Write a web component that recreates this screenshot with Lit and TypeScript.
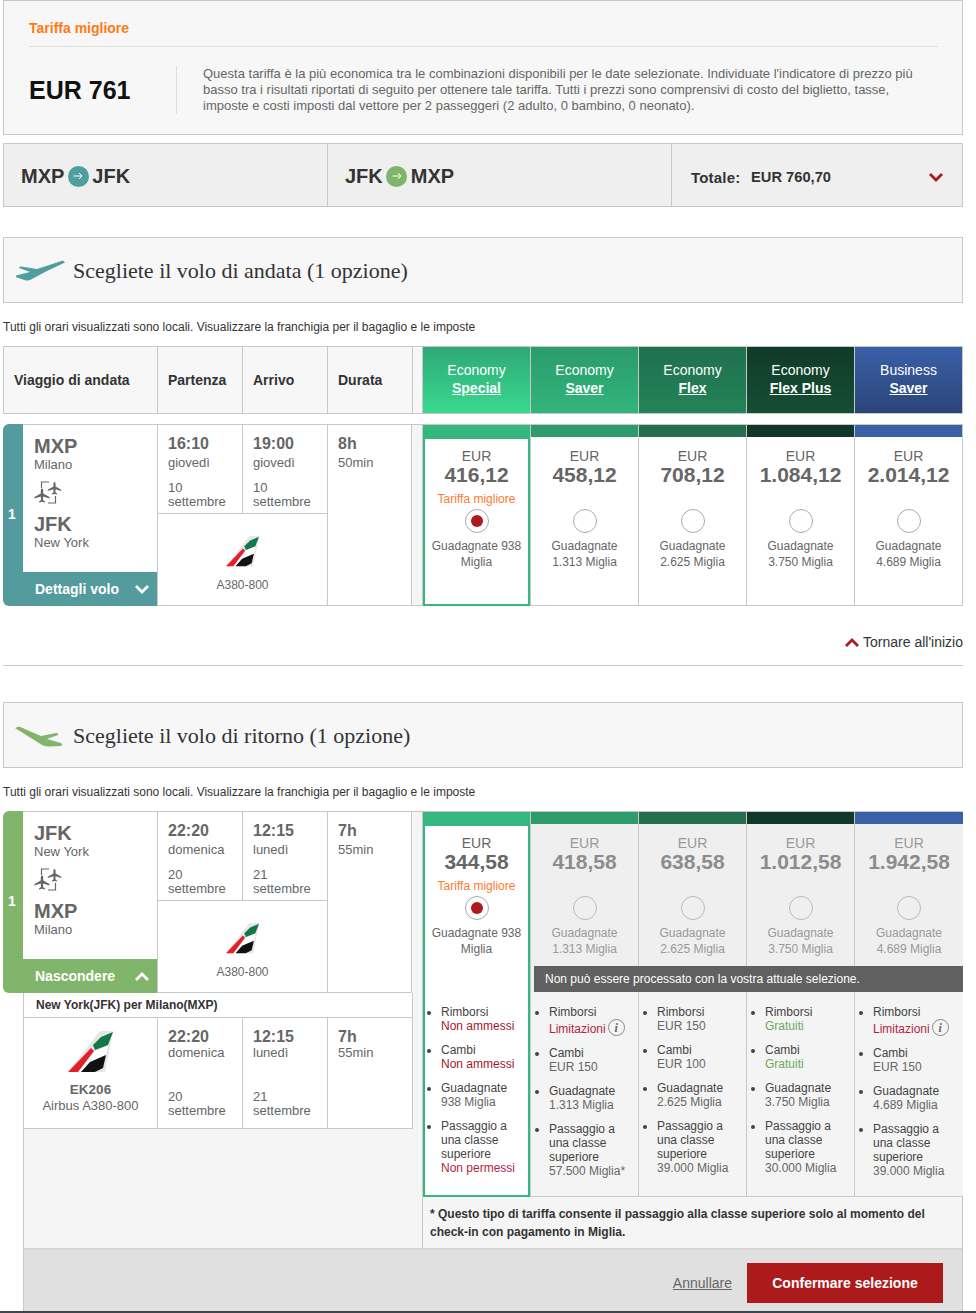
import { LitElement, html, css } from 'lit'
import { customElement } from 'lit/decorators.js'

const FARE_COLORS = ['#35b880', '#2e9b6c', '#236f50', '#12382a', '#3a60a8']

const HEADERS = [
    ['Economy', 'Special', 'h-special'],
    ['Economy', 'Saver', 'h-saver'],
    ['Economy', 'Flex', 'h-flex'],
    ['Economy', 'Flex Plus', 'h-plus'],
    ['Business', 'Saver', 'h-business'],
]

const OUT_FARES = [
    { price: '416,12', miles: '938', best: true },
    { price: '458,12', miles: '1.313' },
    { price: '708,12', miles: '2.625' },
    { price: '1.084,12', miles: '3.750' },
    { price: '2.014,12', miles: '4.689' },
]

const RET_FARES = [
    { price: '344,58', miles: '938', best: true },
    { price: '418,58', miles: '1.313' },
    { price: '638,58', miles: '2.625' },
    { price: '1.012,58', miles: '3.750' },
    { price: '1.942,58', miles: '4.689' },
]

type Cond = [string, string, string?]

const CONDITIONS: { miles: string; refund: Cond; change: Cond; upgrade: Cond }[] = [
    {
        miles: '938',
        refund: ['Non ammessi', 'no'],
        change: ['Non ammessi', 'no'],
        upgrade: ['Non permessi', 'limit'],
    },
    {
        miles: '1.313',
        refund: ['Limitazioni', 'limit', 'info'],
        change: ['EUR 150', ''],
        upgrade: ['57.500 Miglia*', ''],
    },
    {
        miles: '2.625',
        refund: ['EUR 150', ''],
        change: ['EUR 100', ''],
        upgrade: ['39.000 Miglia', ''],
    },
    {
        miles: '3.750',
        refund: ['Gratuiti', 'free'],
        change: ['Gratuiti', 'free'],
        upgrade: ['30.000 Miglia', ''],
    },
    {
        miles: '4.689',
        refund: ['Limitazioni', 'limit', 'info'],
        change: ['EUR 150', ''],
        upgrade: ['39.000 Miglia', ''],
    },
]

const tail = (w: number, h: number) => html`<svg width=${w} height=${h} viewBox="0 0 45 42">
    <path d="M0 41 L32 0 L45 0 L37 41 Z" fill="#e6e6e6" />
    <path d="M25 14 L33 6 L45 1 L40 14 L27 19 Z" fill="#12784a" />
    <path d="M10 41 L27 20 L40 15 L38 24 L22 31 L13 41 Z" fill="#fff" />
    <path d="M0 41 L23 17 L26 20 L10 41 Z" fill="#e2202c" />
    <path d="M13 41 L22 31 L38 24 L35 37 L27 41 Z" fill="#111" />
</svg>`

const PLANE =
    'M0 0 Q1.2 0 1.2 2 L1.2 5 L7.5 8.5 L7.5 10 L1.2 8 L1 11.5 L3 13 L3 14 L0 13.2 L-3 14 L-3 13 L-1 11.5 L-1.2 8 L-7.5 10 L-7.5 8.5 L-1.2 5 L-1.2 2 Q-1.2 0 0 0 Z'

const connIcon = html`<svg class="conn" width="28" height="23" viewBox="0 0 28 23" fill="none">
    <path d="M7.5 7 V1 H15 M14 22 H21.5 V15" stroke="#666" stroke-width="1.2" />
    <path d=${PLANE} fill="#666" transform="translate(20.5 1) scale(.9)" />
    <path d=${PLANE} fill="#666" transform="translate(8 7.5) scale(1)" />
</svg>`

const planeUp = (c: string) => html`<svg width="52" height="22" viewBox="0 0 52 22">
    <path
        d="M51 2.5 L49 .5 L23 9 L7 6.5 Q5 6.5 5 8 L16 12 L2 15.5 Q1 17 3 17.5 L12 20.5 Q15 21 18 19 L32 11.5 Z"
        fill=${c}
    />
</svg>`

const planeDown = (c: string) => html`<svg width="52" height="23" viewBox="0 0 52 23">
    <path
        d="M1 3 L5 1.5 L27 11 L42 8 Q45 8 44 10 L33 14 L47 18 Q49 20 47 21 L36 21.5 Q31 21.5 28 20 Z"
        fill=${c}
    />
</svg>`

const chevron = (c: string, up = false) => html`<svg width="14" height="9" viewBox="0 0 14 9">
    <path
        d=${up ? 'M1 8 L7 2 L13 8' : 'M1 1 L7 7 L13 1'}
        fill="none"
        stroke=${c}
        stroke-width="2.8"
    />
</svg>`

const arrowBadge = (c: string) => html`<span class="badge" style="background:${c}">
    <svg width="10" height="8" viewBox="0 0 10 8">
        <path d="M0.5 4 H9 M6 1 L9 4 L6 7" fill="none" stroke="#fff" stroke-width="1" />
    </svg>
</span>`

@customElement('app-root')
export class AppRoot extends LitElement {
    static styles = css`
        :host {
            display: block;
            width: 976px;
            height: 1313px;
            overflow: hidden;
            background: #fff;
            font-family: 'Liberation Sans', Arial, sans-serif;
            font-size: 12px;
            color: #666;
        }
        * {
            box-sizing: border-box;
        }
        .page {
            width: 960px;
            margin-left: 3px;
        }

        /* best fare box */
        .best {
            height: 135px;
            background: #f7f7f7;
            border: 1px solid #c8c8c8;
            padding: 0 24px 0 25px;
        }
        .best-title {
            height: 46px;
            padding-top: 19px;
            border-bottom: 1px solid #ddd;
            font-size: 14px;
            font-weight: bold;
            color: #ff7a14;
        }
        .best-body {
            display: flex;
            align-items: center;
            margin-top: 19px;
        }
        .best-price {
            width: 148px;
            height: 48px;
            line-height: 48px;
            border-right: 1px solid #ddd;
            font-size: 25px;
            font-weight: bold;
            color: #111;
        }
        .best-text {
            flex: 1;
            padding-left: 26px;
            font-size: 13px;
            line-height: 16px;
            white-space: nowrap;
            color: #666;
        }

        /* route bar */
        .routes {
            display: flex;
            height: 64px;
            margin-top: 8px;
            background: #efefef;
            border: 1px solid #c8c8c8;
        }
        .route {
            display: flex;
            align-items: center;
            gap: 3.5px;
            padding: 2px 0 0 17px;
            border-right: 1px solid #c8c8c8;
            font-size: 20px;
            font-weight: bold;
            color: #333;
        }
        .route.first {
            width: 324px;
        }
        .route.second {
            width: 344px;
        }
        .badge {
            display: inline-flex;
            align-items: center;
            justify-content: center;
            width: 21px;
            height: 21px;
            border-radius: 50%;
        }
        .total {
            flex: 1;
            display: flex;
            align-items: center;
            padding: 4px 19px 0 19px;
            font-weight: bold;
            color: #333;
        }
        .total-label {
            font-size: 15px;
            letter-spacing: 0.2px;
            width: 60px;
        }
        .total-value {
            flex: 1;
            font-size: 14.7px;
        }

        /* section heading */
        .heading {
            display: flex;
            align-items: center;
            gap: 7px;
            height: 66px;
            padding: 2px 0 0 10px;
            background: #f7f7f7;
            border: 1px solid #c8c8c8;
            font-family: 'Liberation Serif', serif;
            font-size: 22px;
            color: #333;
        }
        .heading.outbound {
            margin-top: 30px;
        }
        .heading.inbound {
            margin-top: 36px;
        }
        .note {
            height: 43px;
            padding-top: 17px;
            line-height: 14px;
            color: #333;
        }

        /* header row */
        .thead {
            display: grid;
            grid-template-columns: 154px 85px 85px 85px 10px repeat(4, 108px) 109px;
            height: 68px;
            border: 1px solid #c8c8c8;
            border-width: 1px 0;
            width: 960px;
            background: #f7f7f7;
        }
        .th {
            display: flex;
            align-items: center;
            padding-left: 10px;
            border-left: 1px solid #c8c8c8;
            font-size: 14px;
            font-weight: bold;
            color: #333;
        }
        .th.gap {
            padding: 0;
        }
        .fh {
            display: flex;
            flex-direction: column;
            align-items: center;
            justify-content: center;
            padding-bottom: 2px;
            border-left: 1px solid #c8c8c8;
            font-size: 14px;
            line-height: 18px;
            color: #fff;
        }
        .fh b {
            text-decoration: underline;
        }
        .fh:last-child {
            border-right: 1px solid #c8c8c8;
        }
        .h-special {
            background: linear-gradient(#2fa878, #39d98f);
        }
        .h-saver {
            background: linear-gradient(#2b9b6c, #31b57b);
        }
        .h-flex {
            background: linear-gradient(#21704f, #238358);
        }
        .h-plus {
            background: linear-gradient(#113a29, #154f34);
        }
        .h-business {
            background: linear-gradient(#3a60a8, #2a4578);
        }

        /* flight row */
        .row {
            display: grid;
            grid-template-columns: 154px 85px 85px 85px 10px repeat(4, 108px) 109px;
            width: 960px;
            height: 182px;
        }
        .row.outbound {
            margin-top: 10px;
        }
        .leg {
            position: relative;
            display: flex;
            flex-direction: column;
            border-radius: 6px 0 0 6px;
            overflow: hidden;
            background: var(--accent);
            color: #fff;
        }
        .leg-num {
            position: absolute;
            left: 5px;
            top: 82px;
            font-size: 14px;
            font-weight: bold;
        }
        .leg-info {
            height: 148px;
            margin-left: 20px;
            padding: 9px 0 0 11px;
            background: #fff;
            border-top: 1px solid #c8c8c8;
            color: #666;
        }
        .code {
            font-size: 20px;
            font-weight: bold;
            line-height: 24px;
        }
        .city {
            font-size: 13px;
            line-height: 13px;
        }
        .conn {
            display: block;
            margin: 10px 0 8px 0;
        }
        .leg-toggle {
            flex: 1;
            display: flex;
            align-items: center;
            justify-content: space-between;
            padding: 0 8px 0 32px;
            font-size: 14px;
            font-weight: bold;
        }
        .times {
            grid-column: span 2;
            display: flex;
            flex-direction: column;
            border: 1px solid #c8c8c8;
            border-width: 1px 0 1px 1px;
        }
        .times-top {
            display: grid;
            grid-template-columns: 84px 85px;
            height: 89px;
            border-bottom: 1px solid #c8c8c8;
        }
        .time {
            padding: 9px 0 0 10px;
        }
        .time + .time {
            border-left: 1px solid #c8c8c8;
        }
        .clock {
            font-size: 16px;
            font-weight: bold;
            line-height: 20px;
        }
        .day {
            font-size: 13px;
            line-height: 14px;
            margin-top: 2px;
        }
        .date {
            font-size: 13px;
            line-height: 14px;
            margin-top: 11px;
        }
        .craft {
            flex: 1;
            display: flex;
            flex-direction: column;
            align-items: center;
            padding-top: 22px;
            gap: 11px;
        }
        .craft svg {
            display: block;
        }
        .dur {
            padding: 9px 0 0 10px;
            border: 1px solid #c8c8c8;
        }
        .gapcell {
            background: #f5f5f5;
            border-bottom: 1px solid #c8c8c8;
            border-top: 1px solid #c8c8c8;
        }
        .gapcell.open {
            border-bottom: 0;
        }

        /* fare cell */
        .fare {
            position: relative;
            display: flex;
            flex-direction: column;
            align-items: center;
            border: 1px solid #c8c8c8;
            border-width: 1px 0 1px 1px;
            background: #fff;
            text-align: center;
        }
        .fare:last-child {
            border-right: 1px solid #c8c8c8;
        }
        .strip {
            align-self: stretch;
            height: 12px;
            flex: none;
        }
        .eur {
            margin-top: 12px;
            font-size: 14px;
            line-height: 15px;
        }
        .amount {
            font-size: 21px;
            font-weight: bold;
            line-height: 22px;
        }
        .best-tag {
            height: 17px;
            margin-top: 5px;
            line-height: 17px;
            color: #ff7a2e;
        }
        .radio {
            width: 24px;
            height: 24px;
            margin-top: 1px;
            border: 1px solid #aaa;
            border-radius: 50%;
            background: #fff;
            display: flex;
            align-items: center;
            justify-content: center;
        }
        .radio i {
            display: block;
            width: 12px;
            height: 12px;
            border-radius: 50%;
            background: #b0191d;
        }
        .miles {
            margin-top: 5px;
            line-height: 16px;
        }
        .fare.selected::after {
            content: '';
            position: absolute;
            left: 0;
            right: 0;
            top: 12px;
            bottom: -1px;
            border: 2px solid #35b880;
            pointer-events: none;
        }
        .fare.off {
            background: #efefef;
            color: #999;
        }
        .fare.off .radio {
            background: #efefef;
            border-color: #bbb;
        }
        .fare.off .amount {
            color: #8c8c8c;
        }

        /* return block */
        .inbound-grid {
            display: grid;
            grid-template-columns: 419px 541px;
            width: 960px;
        }
        .inbound-left {
            display: flex;
            flex-direction: column;
        }
        .inbound-left .row {
            grid-template-columns: 154px 85px 85px 85px 10px;
            width: 419px;
        }
        .sub {
            margin-left: 20px;
            padding-right: 9px;
            background: #f5f5f5;
        }
        .sub-inner {
            width: 390px;
            background: #fff;
            border: 1px solid #c8c8c8;
            border-width: 0 1px;
        }
        .sub-title {
            height: 25px;
            padding-left: 12px;
            line-height: 24px;
            border-bottom: 1px solid #c8c8c8;
            font-weight: bold;
            color: #333;
        }
        .sub-body {
            display: grid;
            grid-template-columns: 133px 85px 85px 85px;
            height: 111px;
            border-bottom: 1px solid #c8c8c8;
        }
        .sub-cell {
            padding: 9px 0 0 10px;
            border-left: 1px solid #c8c8c8;
        }
        .sub-cell.plane {
            border-left: 0;
            padding: 13px 0 0 0;
            display: flex;
            flex-direction: column;
            align-items: center;
        }
        .sub-cell.plane svg {
            display: block;
        }
        .flightno {
            margin-top: 9px;
            font-size: 13.5px;
            font-weight: bold;
            line-height: 16px;
        }
        .plane-type {
            font-size: 13px;
            line-height: 16px;
        }
        .sub-cell .day {
            margin-top: -1px;
        }
        .sub-cell .date {
            margin-top: 30px;
        }
        .filler {
            flex: 1;
            margin-left: 20px;
            background: #f5f5f5;
            border-left: 1px solid #c8c8c8;
        }
        .inbound-right {
            display: flex;
            flex-direction: column;
        }
        .fares {
            position: relative;
            display: grid;
            grid-template-columns: repeat(4, 108px) 109px;
            height: 386px;
        }
        .banner {
            position: absolute;
            left: 112px;
            right: 0;
            top: 155px;
            height: 26px;
            padding-left: 11px;
            line-height: 26px;
            background: #606060;
            color: #fff;
        }
        ul {
            position: absolute;
            top: 180px;
            bottom: 0;
            left: 0;
            width: 100%;
            margin: 0;
            padding: 13px 16px 0 18px;
            list-style: disc;
            text-align: left;
            line-height: 14px;
            color: #444;
        }
        .fare.off ul {
            background: #f4f4f4;
        }
        li {
            margin-bottom: 10px;
        }
        li span {
            display: block;
            white-space: nowrap;
        }
        li span.with-info {
            display: flex;
            align-items: flex-end;
            height: 17px;
        }
        .no {
            color: #a2182b;
        }
        .limit {
            color: #b5243f;
        }
        .free {
            color: #6fa85c;
        }
        .cond-plain {
            color: #666;
        }
        .info {
            display: inline-flex;
            align-items: center;
            justify-content: center;
            flex: none;
            width: 17px;
            height: 17px;
            margin-left: 2px;
            border: 1px solid #888;
            border-radius: 50%;
            font-family: 'Liberation Serif', serif;
            font-style: italic;
            font-weight: bold;
            font-size: 12px;
            color: #666;
        }
        .footnote {
            height: 51px;
            padding: 8px 0 0 7px;
            line-height: 18px;
            background: #f5f5f5;
            border-left: 1px solid #c8c8c8;
            border-right: 1px solid #c8c8c8;
            font-weight: bold;
            color: #333;
        }

        /* top link */
        .back {
            display: flex;
            justify-content: flex-end;
            align-items: center;
            gap: 4px;
            margin-top: 29px;
            height: 14px;
            font-size: 14px;
            color: #333;
        }
        .rule {
            margin-top: 16px;
            border-top: 1px solid #c8c8c8;
        }

        /* footer */
        .footer {
            display: flex;
            align-items: center;
            justify-content: flex-end;
            margin-left: 20px;
            height: 63px;
            padding: 5px 19px 0 0;
            gap: 15px;
            background: #e0e0e0;
            border-top: 2px solid #d4d4d4;
            border-left: 1px solid #c8c8c8;
            border-right: 1px solid #c8c8c8;
        }
        .footer a {
            font-size: 14px;
            color: #666;
            text-decoration: underline;
        }
        .confirm {
            width: 196px;
            height: 40px;
            border: 0;
            background: #ad1a1c;
            color: #fff;
            font: bold 14px 'Liberation Sans', Arial, sans-serif;
        }
        .page-end {
            height: 2px;
            background: #3c4650;
        }
    `

    private renderLeg(
        accent: string,
        from: string[],
        to: string[],
        toggle: string,
        up: boolean,
    ) {
        return html`<div class="leg" style="--accent:${accent}">
            <div class="leg-num">1</div>
            <div class="leg-info">
                <div class="code">${from[0]}</div>
                <div class="city">${from[1]}</div>
                ${connIcon}
                <div class="code">${to[0]}</div>
                <div class="city">${to[1]}</div>
            </div>
            <div class="leg-toggle">${toggle} ${chevron('#fff', up)}</div>
        </div>`
    }

    private renderTimes(dep: string[], arr: string[]) {
        const col = (t: string[]) => html`<div class="time">
            <div class="clock">${t[0]}</div>
            <div class="day">${t[1]}</div>
            <div class="date">${t[2]}<br />settembre</div>
        </div>`
        return html`<div class="times">
            <div class="times-top">${col(dep)}${col(arr)}</div>
            <div class="craft">${tail(33, 31)}<div>A380-800</div></div>
        </div>`
    }

    private renderDur(h: string, m: string) {
        return html`<div class="dur">
            <div class="clock">${h}</div>
            <div class="day">${m}</div>
        </div>`
    }

    private renderFare(f: any, i: number, off = false, cond = false) {
        const c = CONDITIONS[i]
        const line = (label: string, v: Cond) => html`<li>
            ${label}
            <span class="${v[1] || 'cond-plain'} ${v[2] ? 'with-info' : ''}"
                >${v[0]}${v[2] ? html`<i class="info">i</i>` : ''}</span
            >
        </li>`
        return html`<div class="fare ${f.best ? 'selected' : ''} ${off ? 'off' : ''}">
            <div class="strip" style="background:${FARE_COLORS[i]}"></div>
            <div class="eur">EUR</div>
            <div class="amount">${f.price}</div>
            <div class="best-tag">${f.best ? 'Tariffa migliore' : ''}</div>
            <div class="radio">${f.best ? html`<i></i>` : ''}</div>
            <div class="miles">
                Guadagnate ${f.best ? f.miles : html`<br />${f.miles}`}${f.best ? html`<br />` : ' '}Miglia
            </div>
            ${cond
                ? html`<ul>
                      ${line('Rimborsi', c.refund)} ${line('Cambi', c.change)}
                      ${line('Guadagnate', [c.miles + ' Miglia', ''])}
                      ${line('Passaggio a una classe superiore', c.upgrade)}
                  </ul>`
                : ''}
        </div>`
    }

    render() {
        return html`<div class="page">
                <div class="best">
                    <div class="best-title">Tariffa migliore</div>
                    <div class="best-body">
                        <div class="best-price">EUR 761</div>
                        <div class="best-text">
                            Questa tariffa è la più economica tra le combinazioni disponibili per le date selezionate. Individuate l'indicatore di prezzo più<br />
                            basso tra i risultati riportati di seguito per ottenere tale tariffa. Tutti i prezzi sono comprensivi di costo del biglietto, tasse,<br />
                            imposte e costi imposti dal vettore per 2 passeggeri (2 adulto, 0 bambino, 0 neonato).
                        </div>
                    </div>
                </div>

                <div class="routes">
                    <div class="route first">MXP ${arrowBadge('#4f9ea0')} JFK</div>
                    <div class="route second">JFK ${arrowBadge('#7fb56b')} MXP</div>
                    <div class="total">
                        <span class="total-label">Totale:</span>
                        <span class="total-value">EUR 760,70</span>
                        ${chevron('#ad1a1c')}
                    </div>
                </div>

                <div class="heading outbound">
                    ${planeUp('#4f9ea0')} Scegliete il volo di andata (1 opzione)
                </div>
                <div class="note">
                    Tutti gli orari visualizzati sono locali. Visualizzare la franchigia per il bagaglio e le imposte
                </div>

                <div class="thead">
                    <div class="th">Viaggio di andata</div>
                    <div class="th">Partenza</div>
                    <div class="th">Arrivo</div>
                    <div class="th">Durata</div>
                    <div class="th gap"></div>
                    ${HEADERS.map(
                        (h) => html`<div class="fh ${h[2]}"><span>${h[0]}</span><b>${h[1]}</b></div>`,
                    )}
                </div>

                <div class="row outbound">
                    ${this.renderLeg('#549b9e', ['MXP', 'Milano'], ['JFK', 'New York'], 'Dettagli volo', false)}
                    ${this.renderTimes(['16:10', 'giovedì', '10'], ['19:00', 'giovedì', '10'])}
                    ${this.renderDur('8h', '50min')}
                    <div class="gapcell"></div>
                    ${OUT_FARES.map((f, i) => this.renderFare(f, i))}
                </div>

                <div class="back">${chevron('#ad1a1c', true)} Tornare all'inizio</div>
                <div class="rule"></div>

                <div class="heading inbound">
                    ${planeDown('#82b56c')} Scegliete il volo di ritorno (1 opzione)
                </div>
                <div class="note">
                    Tutti gli orari visualizzati sono locali. Visualizzare la franchigia per il bagaglio e le imposte
                </div>

                <div class="inbound-grid">
                    <div class="inbound-left">
                        <div class="row">
                            ${this.renderLeg('#82b56c', ['JFK', 'New York'], ['MXP', 'Milano'], 'Nascondere', true)}
                            ${this.renderTimes(['22:20', 'domenica', '20'], ['12:15', 'lunedì', '21'])}
                            ${this.renderDur('7h', '55min')}
                            <div class="gapcell open"></div>
                        </div>
                        <div class="sub">
                            <div class="sub-inner">
                                <div class="sub-title">New York(JFK) per Milano(MXP)</div>
                                <div class="sub-body">
                                    <div class="sub-cell plane">
                                        ${tail(45, 42)}
                                        <div class="flightno">EK206</div>
                                        <div class="plane-type">Airbus A380-800</div>
                                    </div>
                                    <div class="sub-cell">
                                        <div class="clock">22:20</div>
                                        <div class="day">domenica</div>
                                        <div class="date">20<br />settembre</div>
                                    </div>
                                    <div class="sub-cell">
                                        <div class="clock">12:15</div>
                                        <div class="day">lunedì</div>
                                        <div class="date">21<br />settembre</div>
                                    </div>
                                    <div class="sub-cell">
                                        <div class="clock">7h</div>
                                        <div class="day">55min</div>
                                    </div>
                                </div>
                            </div>
                        </div>
                        <div class="filler"></div>
                    </div>
                    <div class="inbound-right">
                        <div class="fares">
                            ${RET_FARES.map((f, i) => this.renderFare(f, i, i > 0, true))}
                            <div class="banner">Non può essere processato con la vostra attuale selezione.</div>
                        </div>
                        <div class="footnote">
                            * Questo tipo di tariffa consente il passaggio alla classe superiore solo al momento del
                            check-in con pagamento in Miglia.
                        </div>
                    </div>
                </div>

                <div class="footer">
                    <a>Annullare</a>
                    <button class="confirm">Confermare selezione</button>
                </div>
            </div>
            <div class="page-end"></div>`
    }
}
